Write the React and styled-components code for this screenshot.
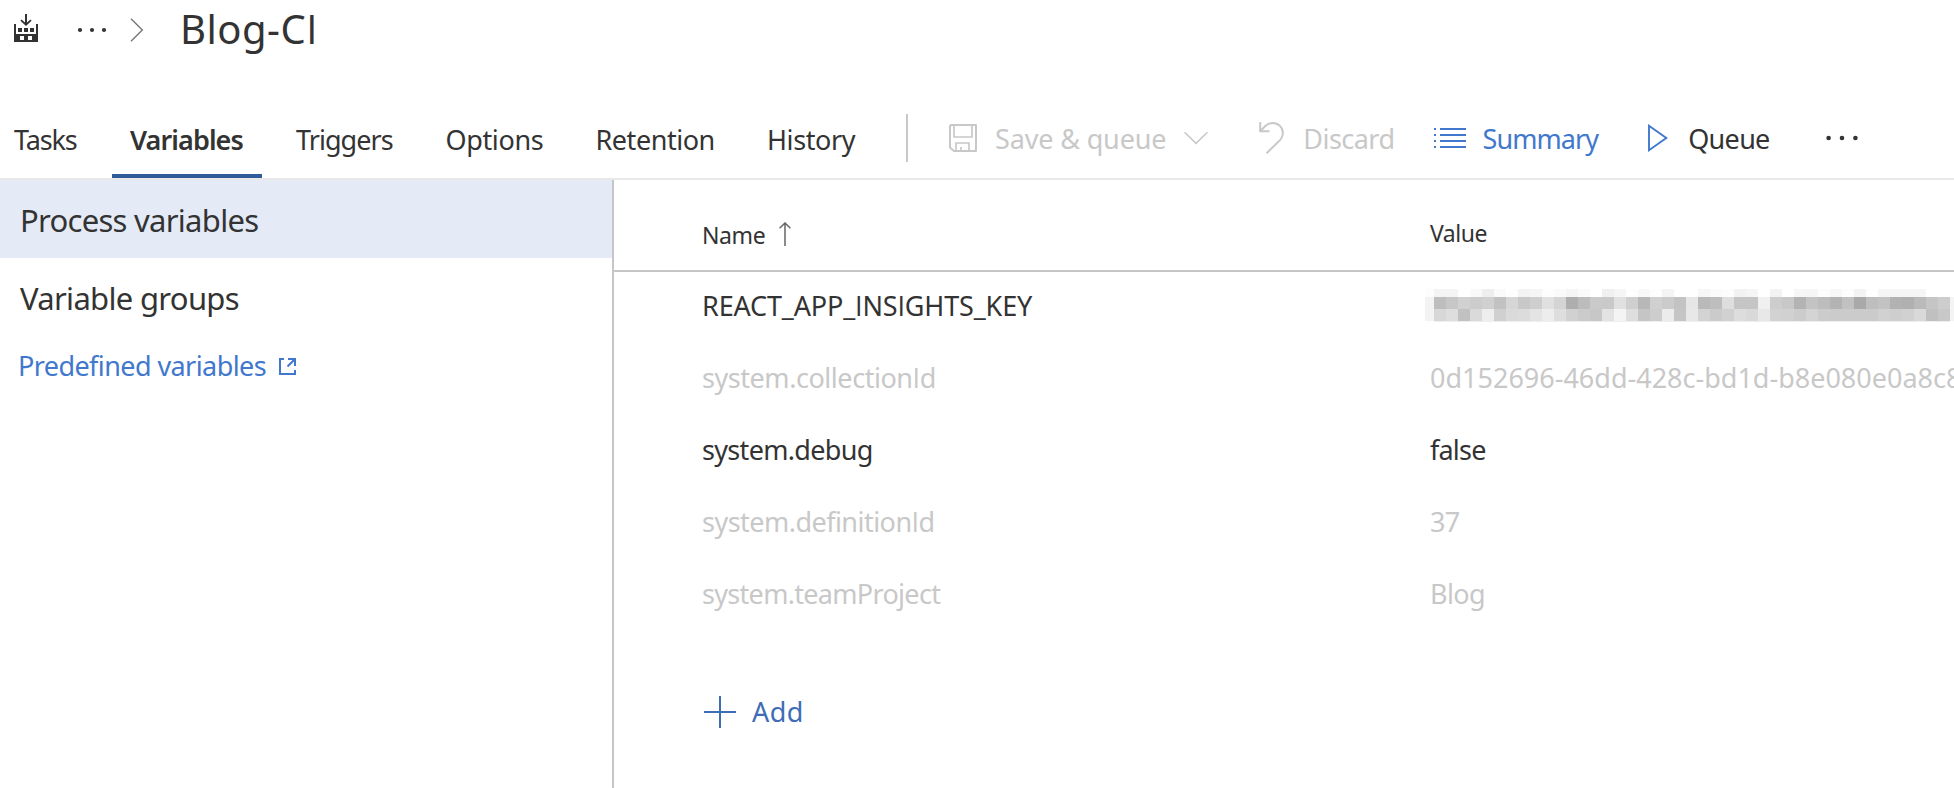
import React from "react";
import styled, { createGlobalStyle } from "styled-components";

const color = {
  text: "#333333",
  muted: "#c8c8c8",
  link: "#4178cd",
  action: "#3e6db5",
  accent: "#2f5b99",
  selected: "#e4ebf7",
  hairline: "#e8e8e8",
  rule: "#c6c6c6",
};

const GlobalStyle = createGlobalStyle`
  *, *::before, *::after { box-sizing: border-box; }
  body {
    margin: 0;
    background: #fff;
    color: ${color.text};
    font-family: "Noto Sans", "Open Sans", sans-serif;
    font-size: 27px;
    overflow: hidden;
  }
  svg { display: block; flex: none; }
`;

const Page = styled.div`
  display: flex;
  flex-direction: column;
  width: 100%;
  height: 100vh;
  overflow: hidden;
`;

const TextRun = styled.span`
  letter-spacing: ${(p) => p.$track || 0}px;
  white-space: nowrap;
`;

const PlainCapital = styled.span`
  font-family: "Open Sans", sans-serif;
`;

/* Sets the capital I without serifs, next to the single-storey g of the main face. */
function Label({ children, track }) {
  return (
    <TextRun $track={track}>
      {children.split(/(I)/).map((part, i) =>
        part === "I" ? <PlainCapital key={i}>I</PlainCapital> : part
      )}
    </TextRun>
  );
}

/* ---------- header ---------- */

const Header = styled.header`
  display: flex;
  align-items: flex-start;
  flex: none;
  height: 98px;
  padding-left: 14px;
`;

const BuildMark = styled.div`
  margin-top: 14px;
`;

const Crumbs = styled.div`
  display: flex;
  align-items: center;
  gap: 22px;
  margin: 18px 0 0 38px;
`;

const Title = styled.h1`
  margin: 0 0 0 36px;
  font-size: 40px;
  font-weight: 400;
  line-height: 57px;
`;

/* ---------- tab bar ---------- */

const Bar = styled.div`
  display: flex;
  flex: none;
  height: 82px;
  border-bottom: 2px solid ${color.hairline};
`;

const Tabs = styled.nav`
  display: flex;
  gap: 16px;
  margin-left: -4px;
`;

const Tab = styled.a`
  width: ${(p) => p.$width}px;
  height: 80px;
  padding: 7px 0 0 18px;
  line-height: 69px;
  font-weight: ${(p) => (p.$active ? 600 : 400)};
  border-bottom: 4px solid ${(p) => (p.$active ? color.accent : "transparent")};
`;

const Commands = styled.div`
  display: flex;
  align-items: center;
  height: 80px;
`;

const Separator = styled.div`
  width: 2px;
  height: 48px;
  margin: 0 41px 0 32px;
  background: ${color.muted};
`;

const Command = styled.div`
  display: flex;
  align-items: center;
  gap: ${(p) => p.$gap}px;
  margin-right: ${(p) => p.$after}px;
  color: ${(p) => p.$color};
  line-height: 75px;
`;

/* ---------- body ---------- */

const Body = styled.main`
  display: flex;
  flex: 1;
  min-height: 0;
`;

const Sidebar = styled.aside`
  flex: none;
  width: 614px;
  border-right: 2px solid ${color.rule};
`;

const SideItem = styled.div`
  height: 78px;
  padding: 2px 0 0 20px;
  font-size: 31px;
  line-height: 76px;
  background: ${(p) => (p.$selected ? color.selected : "transparent")};
`;

const SideLink = styled.a`
  display: flex;
  align-items: center;
  gap: 13px;
  height: 60px;
  padding-left: 18px;
  line-height: 60px;
  color: ${color.link};
`;

const Content = styled.section`
  flex: 1;
  min-width: 0;
`;

const columns = `
  display: grid;
  grid-template-columns: 728px 1fr;
  padding-left: 88px;
`;

const TableHead = styled.div`
  ${columns}
  height: 92px;
  border-bottom: 2px solid ${color.rule};
  font-size: 23px;
`;

const HeadCell = styled.div`
  display: flex;
  gap: 14px;
  padding-top: ${(p) => p.$top}px;
  line-height: 70px;
`;

const SortMark = styled.div`
  padding-top: 22px;
`;

const Row = styled.div`
  ${columns}
  height: 72px;
  line-height: 67px;
  color: ${(p) => (p.$muted ? color.muted : color.text)};
`;

const Cell = styled.div`
  min-width: 0;
  overflow: hidden;
  white-space: nowrap;
`;

const SecretCell = styled(Cell)`
  padding-top: 17px;
  margin-left: -5px;
`;

const AddButton = styled.div`
  display: flex;
  align-items: center;
  gap: 16px;
  margin: 48px 0 0 90px;
  height: 64px;
  line-height: 62px;
  color: ${color.action};
`;

/* ---------- icons ---------- */

const BuildIcon = () => (
  <svg width="24" height="28" viewBox="0 0 24 28" fill="#333">
    <path d="M11 0h2v8.600l3.400-3.200 1.200 1.300L12 12 6.400 6.700l1.200-1.300L11 8.600z" />
    <path fillRule="evenodd" d="M0 10h2v10h20V10h2v18H0zM6 22v4h4v-4zM14 22v4h4v-4z" />
    <path d="M4 14h4v4H4zM10 14h4v4h-4zM16 14h4v4h-4z" />
  </svg>
);

const DotsIcon = ({ width, step, r }) => (
  <svg width={width} height="6" viewBox={`0 0 ${width} 6`} fill="#333">
    {[0, 1, 2].map((i) => (
      <circle key={i} cx={width / 2 + (i - 1) * step} cy="3" r={r} />
    ))}
  </svg>
);

const CrumbIcon = () => (
  <svg width="14" height="24" viewBox="0 0 14 24" fill="none" stroke="#777" strokeWidth="1.400">
    <path d="M1 .7 12.300 12 1 23.300" />
  </svg>
);

const SaveIcon = () => (
  <svg width="28" height="28" viewBox="0 0 28 28" fill="none" stroke="currentColor" strokeWidth="2">
    <path d="M2 1h25v26H5l-4-3.600V2z" strokeLinejoin="round" />
    <path d="M5 1v12h18V1M7 27v-8h13v8M12 27v-4" strokeWidth="1.700" />
  </svg>
);

const ChevronIcon = () => (
  <svg width="24" height="14" viewBox="0 0 24 14" fill="none" stroke="currentColor" strokeWidth="1.500">
    <path d="M.6 1.200 12 12.400 23.400 1.200" />
  </svg>
);

const UndoIcon = () => (
  <svg width="25" height="32" viewBox="0 0 25 32" fill="none" stroke="currentColor" strokeWidth="2">
    <path d="M1.200 0v9.200h9.300" />
    <path d="M1.200 9.200 6.300 4C10.500 0 17 .1 20.900 3.900c4.200 4.200 3.700 10.500.1 14.200L7.600 31.200" />
  </svg>
);

const ListIcon = () => (
  <svg width="32" height="20" viewBox="0 0 32 20" fill="currentColor">
    {[0, 6, 12, 18].map((y) => (
      <path key={y} d={`M0 ${y}h2v2H0zM6 ${y}h26v2H6z`} />
    ))}
  </svg>
);

const PlayIcon = () => (
  <svg width="20" height="28" viewBox="0 0 20 28" fill="none" stroke={color.link} strokeWidth="1.900">
    <path d="M1 1.800v24.400L18.300 14z" />
  </svg>
);

const ExternalIcon = () => (
  <svg width="17" height="17" viewBox="0 0 17 17" fill="none" stroke="currentColor" strokeWidth="2">
    <path d="M5 1H1v15h15v-4M9 1h7v7M16 1 8.500 8.500" />
  </svg>
);

const SortIcon = () => (
  <svg width="12" height="24" viewBox="0 0 12 24" fill="none" stroke="#666" strokeWidth="1.500">
    <path d="M6 24V1.200M.6 6.300 6 1l5.400 5.300" />
  </svg>
);

const PlusIcon = () => (
  <svg width="32" height="32" viewBox="0 0 32 32" fill="currentColor">
    <path d="M15 0h2v15h15v2H17v15h-2V17H0v-2h15z" />
  </svg>
);

/* ---------- masked secret ---------- */

const maskRows = [
  { y: 0, h: 8, edge: "fd", tail: "ff", cells: "f4 f4 ff f9 ee fa fe f3 f5 fd fa f5 fa ff f0 f5 fe f8 fe f4 ff ff f6 fb fd f2 f5 ff f3 ff f6 f5 fd f7 fd f3 fe f5 f5 f5 f5 ff ff" },
  { y: 8, h: 12, edge: "f3", tail: "f4", cells: "be c7 d1 cc d0 c2 d6 c8 ce e0 d4 ae bc ca c9 e0 cf b8 d0 cb c3 e6 b9 be de c5 c5 f0 cd c8 b3 c3 bd b3 c1 a9 be c2 b2 b0 ba c5 cd" },
  { y: 20, h: 12, edge: "f3", tail: "f4", cells: "d8 de c1 da ee d0 da dc e4 ed de d1 cb c7 e3 f4 de c5 cd ec c5 e8 d3 cb d1 dd d9 e8 d2 d1 cc d4 cc cb cb cb cb d1 ce d1 d9 c0 c8" },
  { y: 32, h: 1, edge: "fd", tail: "fd", cells: Array(43).fill("ee").join(" ") },
];

const MaskedValue = () => (
  <svg width="529" height="34" viewBox="0 0 529 34" shapeRendering="crispEdges" aria-label="Masked value">
    {maskRows.map((row) => (
      <g key={row.y}>
        <rect x="0" y={row.y} width="9" height={row.h} fill={`#${row.edge.repeat(3)}`} />
        {row.cells.split(" ").map((tone, i) => (
          <rect key={i} x={9 + i * 12} y={row.y} width="12" height={row.h} fill={`#${tone.repeat(3)}`} />
        ))}
        <rect x="525" y={row.y} width="4" height={row.h} fill={`#${row.tail.repeat(3)}`} />
      </g>
    ))}
  </svg>
);

/* ---------- data ---------- */

const tabs = [
  { label: "Tasks", width: 100, track: -1.15 },
  { label: "Variables", width: 150, track: -0.91, active: true },
  { label: "Triggers", width: 133.5, track: -0.95 },
  { label: "Options", width: 134, track: -0.37 },
  { label: "Retention", width: 155.5, track: -0.46 },
  { label: "History", width: 125, track: -0.4 },
];

const variables = [
  { name: "REACT_APP_INSIGHTS_KEY", track: -0.15, secret: true },
  { name: "system.collectionId", track: -0.45, value: "0d152696-46dd-428c-bd1d-b8e080e0a8c8", valueTrack: 0, muted: true },
  { name: "system.debug", track: -0.68, value: "false", valueTrack: -0.8 },
  { name: "system.definitionId", track: -0.53, value: "37", valueTrack: -0.8, muted: true },
  { name: "system.teamProject", track: -0.69, value: "Blog", valueTrack: -0.6, muted: true },
];

export default function App() {
  return (
    <Page>
      <GlobalStyle />
      <Header>
        <BuildMark><BuildIcon /></BuildMark>
        <Crumbs>
          <DotsIcon width={32} step={12} r={2.1} />
          <CrumbIcon />
        </Crumbs>
        <Title><Label track={0.5}>Blog-CI</Label></Title>
      </Header>

      <Bar>
        <Tabs>
          {tabs.map((t) => (
            <Tab key={t.label} $width={t.width} $active={t.active}>
              <Label track={t.track}>{t.label}</Label>
            </Tab>
          ))}
        </Tabs>
        <Commands>
          <Separator />
          <Command $gap={18} $after={51} $color={color.muted}>
            <SaveIcon />
            <Label track={-0.15}>{"Save & queue"}</Label>
            <ChevronIcon />
          </Command>
          <Command $gap={19} $after={40} $color={color.muted}>
            <UndoIcon />
            <Label track={-0.55}>Discard</Label>
          </Command>
          <Command $gap={16} $after={50} $color={color.link}>
            <ListIcon />
            <Label track={-0.9}>Summary</Label>
          </Command>
          <Command $gap={20} $after={56} $color={color.text}>
            <PlayIcon />
            <Label track={-0.7}>Queue</Label>
          </Command>
          <DotsIcon width={32} step={13.4} r={2.3} />
        </Commands>
      </Bar>

      <Body>
        <Sidebar>
          <SideItem $selected><Label track={-0.72}>Process variables</Label></SideItem>
          <SideItem><Label track={-0.69}>Variable groups</Label></SideItem>
          <SideLink>
            <Label track={-0.58}>Predefined variables</Label>
            <ExternalIcon />
          </SideLink>
        </Sidebar>

        <Content>
          <TableHead>
            <HeadCell $top={20}>
              <Label track={-0.4}>Name</Label>
              <SortMark><SortIcon /></SortMark>
            </HeadCell>
            <HeadCell $top={18}><Label track={-0.5}>Value</Label></HeadCell>
          </TableHead>
          {variables.map((v) => (
            <Row key={v.name} $muted={v.muted}>
              <Cell><Label track={v.track}>{v.name}</Label></Cell>
              {v.secret ? (
                <SecretCell><MaskedValue /></SecretCell>
              ) : (
                <Cell><Label track={v.valueTrack}>{v.value}</Label></Cell>
              )}
            </Row>
          ))}
          <AddButton>
            <PlusIcon />
            <Label track={0.4}>Add</Label>
          </AddButton>
        </Content>
      </Body>
    </Page>
  );
}
